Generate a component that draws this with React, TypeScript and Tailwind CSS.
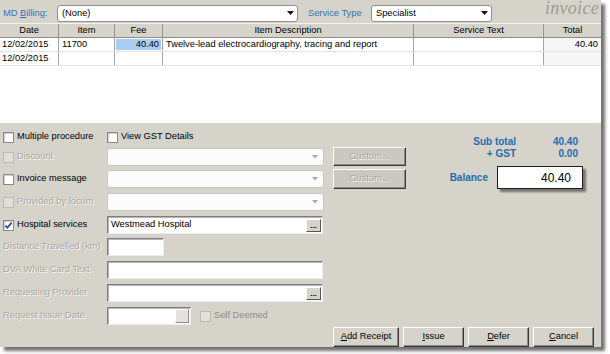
import type { ReactNode } from 'react'

const cols = [
  { w: 'w-[59px]', label: 'Date' },
  { w: 'w-[56px]', label: 'Item' },
  { w: 'w-[48px]', label: 'Fee' },
  { w: 'w-[251px]', label: 'Item Description' },
  { w: 'w-[130px]', label: 'Service Text' },
  { w: 'w-[57px]', label: 'Total' },
]

const dim = 'text-[#aaa79f] [text-shadow:1px_1px_0_rgba(255,255,255,0.85)]'

function Check({ checked = false, disabled = false }: { checked?: boolean; disabled?: boolean }) {
  return (
    <span
      className={
        'flex h-[11px] w-[11px] shrink-0 items-center justify-center border ' +
        (disabled
          ? 'border-[#bdbab2] bg-[#e2dfd8]'
          : 'border-[#8a8a8a] bg-white shadow-[inset_1px_1px_0_#cfcfcf]')
      }
    >
      {checked && (
        <svg width="9" height="9" viewBox="0 0 9 9">
          <path d="M1.3 4.6 L3.4 6.8 L7.6 1.6" fill="none" stroke="#23449c" strokeWidth="1.7" />
        </svg>
      )}
    </span>
  )
}

function Combo({ w, text }: { w: string; text: string }) {
  return (
    <div className={`${w} flex h-[17px] items-center rounded-[3px] border border-[#8f8f8f] bg-white pl-[4px] pr-[3px]`}>
      <span className="flex-1">{text}</span>
      <svg width="7" height="5" viewBox="0 0 7 5">
        <path d="M0 0 H7 L3.5 4 Z" fill="#111" />
      </svg>
    </div>
  )
}

function DimCombo() {
  return (
    <div className="flex h-[18px] w-[217px] items-center justify-end rounded-[3px] border border-[#c9c7c2] bg-[#fcfcfc] pr-[5px]">
      <svg width="6" height="4" viewBox="0 0 6 4">
        <path d="M0 0 H6 L3 3.5 Z" fill="#a9a9a9" />
      </svg>
    </div>
  )
}

function Field({ w, children, dots, blank }: { w: string; children?: ReactNode; dots?: boolean; blank?: boolean }) {
  return (
    <div
      className={`${w} flex h-[18px] items-stretch border border-t-[#7e7e7e] border-l-[#7e7e7e] border-r-[#ededed] border-b-[#ededed] bg-white shadow-[inset_1px_1px_0_#b5b5b5]`}
    >
      <span className="flex flex-1 items-center pl-[3px]">{children}</span>
      {dots && (
        <span className="mb-[1px] mr-[1px] mt-[2px] flex w-[15px] items-end justify-center border border-t-white border-l-white border-r-[#555] border-b-[#555] bg-[#d6d3ca] pb-[1px] text-[8px] font-bold leading-none">
          ...
        </span>
      )}
      {blank && (
        <span className="mb-[1px] mr-[1px] mt-[1px] w-[14px] border border-t-white border-l-white border-r-[#8a8a8a] border-b-[#8a8a8a] bg-[#e4e2dc]" />
      )}
    </div>
  )
}

function Btn({ w, children, disabled }: { w: string; children: ReactNode; disabled?: boolean }) {
  return (
    <div
      className={
        `${w} flex items-center justify-center border border-t-white border-l-white border-r-[#3a3a3a] border-b-[#3a3a3a] shadow-[inset_-1px_-1px_0_#8a8a8a] ` +
        (disabled ? `bg-[#cbc8c0] ${dim}` : 'bg-[#d6d3ca] text-black')
      }
    >
      {children}
    </div>
  )
}

export default function App() {
  return (
    <div className="h-[354px] w-[610px] bg-white font-['Liberation_Sans',Arial,sans-serif] text-[9.3px] leading-none text-black">
      <div className="flex h-[347px] w-[601px] flex-col overflow-hidden bg-[#d6d3ca] shadow-[4px_4px_3px_rgba(0,0,0,0.55)]">
        {/* top bar */}
        <div className="flex h-[23px] shrink-0 items-start overflow-hidden pl-[3px] pt-[5px]">
          <span className="flex h-[17px] w-[54px] items-center text-[#2f74c0]">
            MD&nbsp;<span className="underline">B</span>illing:
          </span>
          <Combo w="w-[241px]" text="(None)" />
          <span className="ml-[10px] flex h-[17px] w-[63px] items-center text-[#2f74c0]">Service Type</span>
          <Combo w="w-[121px]" text="Specialist" />
          <span className="-mt-[6px] ml-auto pr-[2px] font-['Liberation_Serif',serif] text-[18px] italic leading-[18px] tracking-[0.3px] text-[#9e9b94]">
            invoice
          </span>
        </div>

        {/* grid */}
        <div className="flex h-[100px] shrink-0 flex-col bg-white">
          <div className="flex h-[15px] border-b border-t border-b-[#8c8c8c] border-t-[#f2f1ec] bg-[#d6d3ca]">
            {cols.map((c, i) => (
              <div
                key={c.label}
                className={`${c.w} flex items-center justify-center ${i < 5 ? 'border-r border-r-[#9a9790]' : ''}`}
              >
                {c.label}
              </div>
            ))}
          </div>
          <div className="flex h-[14px] border-b border-[#e3e3e3]">
            <div className="flex w-[59px] items-center border-r border-[#a3a3a3] pl-[2px]">12/02/2015</div>
            <div className="flex w-[56px] items-center border-r border-[#a3a3a3] pl-[3px]">11700</div>
            <div className="flex w-[48px] border-r border-[#a3a3a3] py-[1px] pl-[1px] pr-[1px]">
              <span className="flex flex-1 items-center justify-end bg-[#a9cdf3] pr-[2px]">40.40</span>
            </div>
            <div className="flex w-[251px] items-center border-r border-[#a3a3a3] pl-[3px]">
              Twelve-lead electrocardiography, tracing and report
            </div>
            <div className="w-[130px] border-r border-[#a3a3a3]" />
            <div className="flex w-[57px] items-center justify-end bg-[#f6f6f6] pr-[3px]">40.40</div>
          </div>
          <div className="flex h-[14px] border-b border-[#e3e3e3]">
            <div className="flex w-[59px] items-center border-r border-[#a3a3a3] pl-[2px]">12/02/2015</div>
            <div className="w-[56px] border-r border-[#a3a3a3]" />
            <div className="w-[48px] border-r border-[#a3a3a3]" />
            <div className="w-[251px] border-r border-[#a3a3a3]" />
            <div className="w-[130px] border-r border-[#a3a3a3]" />
            <div className="w-[57px] bg-[#f6f6f6]" />
          </div>
        </div>

        {/* form */}
        <div className="flex flex-1">
          <div className="flex w-[333px] shrink-0 flex-col pl-[3px] pt-[8px]">
            <div className="flex h-[12px] items-center">
              <div className="flex w-[104px] items-center gap-[3px]">
                <Check />
                <span>Multiple procedure</span>
              </div>
              <div className="flex items-center gap-[3px]">
                <Check />
                <span>View GST Details</span>
              </div>
            </div>
            <div className="mt-[5px] flex items-center">
              <div className={`flex w-[104px] items-center gap-[3px] ${dim}`}>
                <Check disabled />
                <span>Discount</span>
              </div>
              <DimCombo />
            </div>
            <div className="mt-[4px] flex items-center">
              <div className="flex w-[104px] items-center gap-[3px]">
                <Check />
                <span>Invoice message</span>
              </div>
              <DimCombo />
            </div>
            <div className="mt-[5px] flex items-center">
              <div className={`flex w-[104px] items-center gap-[3px] ${dim}`}>
                <Check disabled />
                <span>Provided by locum</span>
              </div>
              <DimCombo />
            </div>
            <div className="mt-[5px] flex items-center">
              <div className="flex w-[104px] items-center gap-[3px]">
                <Check checked />
                <span>Hospital services</span>
              </div>
              <Field w="w-[216px]" dots>
                Westmead Hospital
              </Field>
            </div>
            <div className="mt-[4px] flex items-center">
              <span className={`w-[104px] ${dim}`}>Distance Travelled (km)</span>
              <Field w="w-[57px]" />
            </div>
            <div className="mt-[5px] flex items-center">
              <span className={`w-[104px] ${dim}`}>DVA White Card Text</span>
              <Field w="w-[216px]" />
            </div>
            <div className="mt-[5px] flex items-center">
              <span className={`w-[104px] ${dim}`}>Requesting Provider</span>
              <Field w="w-[216px]" dots />
            </div>
            <div className="mt-[5px] flex items-center">
              <span className={`w-[104px] ${dim}`}>Request Issue Date</span>
              <Field w="w-[84px]" blank />
              <div className="ml-[9px] flex items-center gap-[3px] text-[#8d8b86]">
                <Check disabled />
                <span>Self Deemed</span>
              </div>
            </div>
          </div>

          <div className="flex flex-1 flex-col">
            <div className="flex">
              <div className="mt-[24px] flex w-[73px] flex-col gap-[3px]">
                <Btn w="h-[19px] w-[73px]" disabled>
                  Custom...
                </Btn>
                <Btn w="h-[20px] w-[73px]" disabled>
                  Custom...
                </Btn>
              </div>
              <div className="flex w-[180px] flex-col pt-[13px] text-[10px] font-bold text-[#1f6cb2]">
                <div className="flex h-[12px] items-center">
                  <span className="w-[110px] text-right">Sub total</span>
                  <span className="w-[62px] text-right">40.40</span>
                </div>
                <div className="flex h-[12px] items-center">
                  <span className="w-[110px] text-right">+ GST</span>
                  <span className="w-[62px] text-right">0.00</span>
                </div>
                <div className="mt-[6px] flex h-[23px] items-center">
                  <span className="w-[82px] text-right">Balance</span>
                  <div className="ml-[9px] flex h-[23px] w-[86px] items-center justify-end border border-[#1e1e1e] bg-white pr-[11px] text-[12px] font-medium text-black shadow-[3px_3px_2px_rgba(0,0,0,0.45)]">
                    40.40
                  </div>
                </div>
              </div>
            </div>
            <div className="mt-auto flex h-[20px] gap-[4px]">
              <Btn w="w-[66px]">
                <span className="underline">A</span>dd Receipt
              </Btn>
              <Btn w="w-[61px]">
                <span className="underline">I</span>ssue
              </Btn>
              <Btn w="w-[61px]">
                <span className="underline">D</span>efer
              </Btn>
              <Btn w="w-[61px]">
                <span className="underline">C</span>ancel
              </Btn>
            </div>
          </div>
        </div>
      </div>
    </div>
  )
}
